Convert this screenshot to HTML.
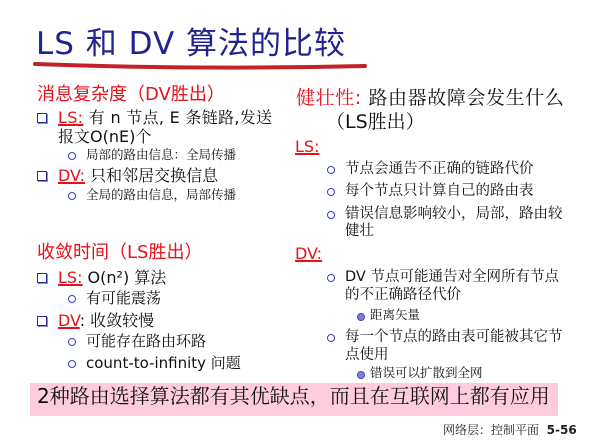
<!DOCTYPE html>
<html><head><meta charset="utf-8"><style>
body{margin:0;width:590px;height:444px;background:#fff;position:relative;overflow:hidden;font-family:"DejaVu Sans","Noto Sans CJK SC",sans-serif;color:#111}
.a{position:absolute;white-space:nowrap;line-height:1}
.s{font-family:"DejaVu Sans","Noto Serif CJK SC",serif}
.r{color:#e8101a}
.u{text-decoration:underline;text-decoration-thickness:1.5px}
.sq{position:absolute;width:8px;height:8px;border:1.5px solid #2a2aa0;box-shadow:1px 1px 0 #8888cc}
.ci{position:absolute;width:6px;height:6px;border:1.5px solid #3a3ad0;border-radius:50%}
.cf{position:absolute;width:6px;height:6px;border:1.5px solid #4444cc;border-radius:50%;background:#8080d8}
</style></head><body>
<div class="a" style="left:36px;top:29px;font-size:31px;color:#232390;letter-spacing:1px">LS 和 DV 算法的比较</div>
<svg style="position:absolute;left:0;top:0" width="590" height="80"><path d="M35 64 Q200 70 365 66" stroke="#c0222a" stroke-width="4" fill="none" stroke-linecap="round"/></svg>

<div class="a r" style="left:37px;top:86px;font-size:18px">消息复杂度（DV胜出）</div>
<div class="sq" style="left:37px;top:113px"></div>
<div class="a s" style="left:58px;top:110px;font-size:16px;letter-spacing:0.3px"><span class="r u">LS:</span> 有 n 节点, E 条链路,发送</div>
<div class="a s" style="left:58px;top:129px;font-size:16px">报文O(nE)个</div>
<div class="ci" style="left:68px;top:152px"></div>
<div class="a s" style="left:86px;top:149px;font-size:12.5px">局部的路由信息：全局传播</div>
<div class="sq" style="left:37px;top:171px"></div>
<div class="a s" style="left:58px;top:168px;font-size:16px"><span class="r u">DV:</span> 只和邻居交换信息</div>
<div class="ci" style="left:68px;top:192px"></div>
<div class="a s" style="left:86px;top:189px;font-size:12.5px">全局的路由信息，局部传播</div>

<div class="a r" style="left:37px;top:244px;font-size:18px">收敛时间（LS胜出）</div>
<div class="sq" style="left:37px;top:273px"></div>
<div class="a s" style="left:58px;top:270px;font-size:16px"><span class="r u">LS:</span> O(n²) 算法</div>
<div class="ci" style="left:68px;top:295px"></div>
<div class="a s" style="left:86px;top:291px;font-size:15px">有可能震荡</div>
<div class="sq" style="left:37px;top:316px"></div>
<div class="a s" style="left:58px;top:313px;font-size:16px"><span class="r u">DV</span>: 收敛较慢</div>
<div class="ci" style="left:68px;top:338px"></div>
<div class="a s" style="left:86px;top:334px;font-size:15px">可能存在路由环路</div>
<div class="ci" style="left:68px;top:360px"></div>
<div class="a s" style="left:86px;top:356px;font-size:15px">count-to-infinity 问题</div>

<div style="position:absolute;left:30px;top:383px;width:528px;height:33px;background:#ffccdf"></div>
<div class="a s" style="left:37px;top:386px;font-size:20px">2种路由选择算法都有其优缺点，而且在互联网上都有应用</div>

<div class="a s" style="left:296px;top:89px;font-size:19px;letter-spacing:0.6px"><span class="r">健壮性:</span> 路由器故障会发生什么</div>
<div class="a s" style="left:326px;top:113px;font-size:19px">（LS胜出）</div>
<div class="a r u" style="left:295px;top:139px;font-size:16px">LS:</div>
<div class="ci" style="left:327px;top:166px"></div>
<div class="a s" style="left:345px;top:162px;font-size:14.5px">节点会通告不正确的链路代价</div>
<div class="ci" style="left:327px;top:188px"></div>
<div class="a s" style="left:345px;top:184px;font-size:14.5px">每个节点只计算自己的路由表</div>
<div class="ci" style="left:327px;top:211px"></div>
<div class="a s" style="left:345px;top:207px;font-size:14.5px">错误信息影响较小，局部，路由较</div>
<div class="a s" style="left:345px;top:224px;font-size:14.5px">健壮</div>
<div class="a r u" style="left:295px;top:246px;font-size:16px">DV:</div>
<div class="ci" style="left:327px;top:274px"></div>
<div class="a s" style="left:345px;top:270px;font-size:14.5px">DV 节点可能通告对全网所有节点</div>
<div class="a s" style="left:345px;top:288px;font-size:14.5px">的不正确路径代价</div>
<div class="cf" style="left:357px;top:313px"></div>
<div class="a s" style="left:370px;top:309px;font-size:12.5px">距离矢量</div>
<div class="ci" style="left:327px;top:334px"></div>
<div class="a s" style="left:345px;top:330px;font-size:14.5px">每一个节点的路由表可能被其它节</div>
<div class="a s" style="left:345px;top:348px;font-size:14.5px">点使用</div>
<div class="cf" style="left:357px;top:371px"></div>
<div class="a s" style="left:370px;top:367px;font-size:12.5px">错误可以扩散到全网</div>

<div class="a s" style="left:443px;top:424px;font-size:12px;color:#222">网络层：控制平面 &nbsp;<b>5-56</b></div>
</body></html>
